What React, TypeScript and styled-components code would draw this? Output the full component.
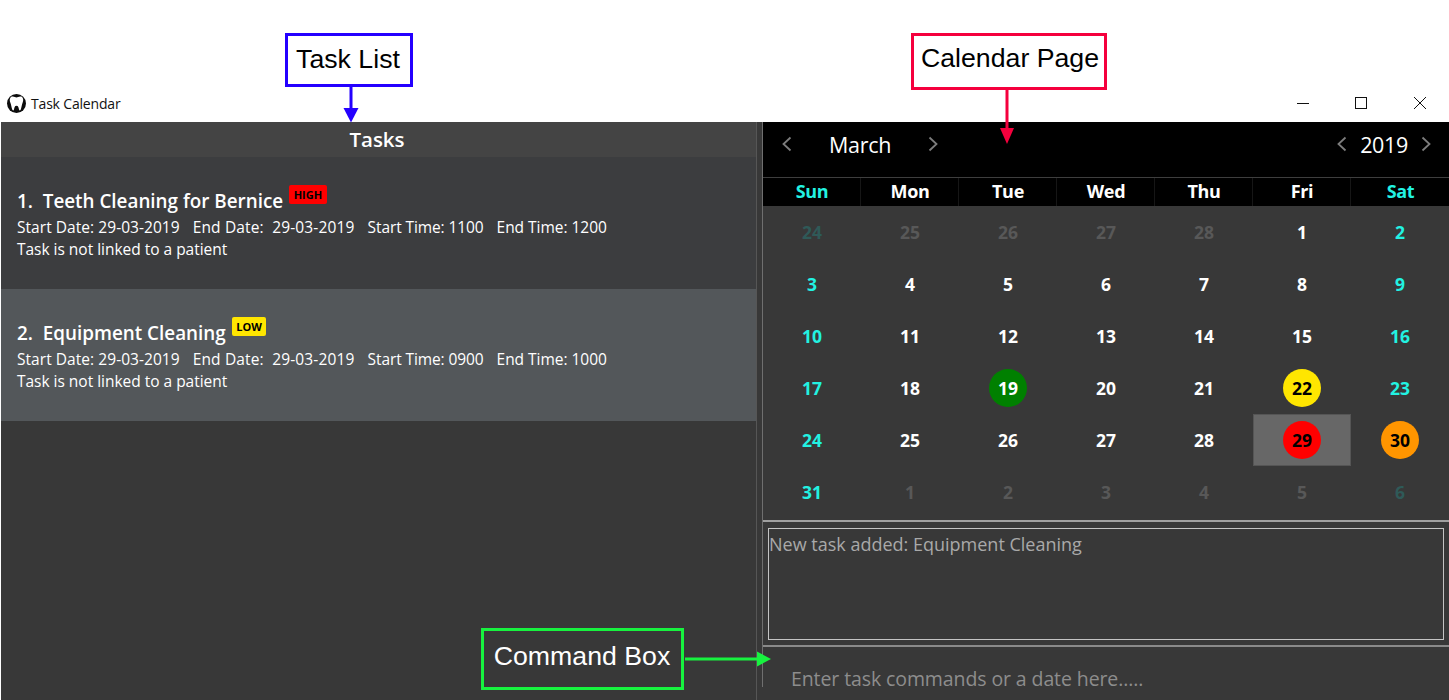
import React from 'react';
import styled, { createGlobalStyle } from 'styled-components';

const UI_FONT = '"Open Sans", "Noto Sans", sans-serif';

const GlobalStyle = createGlobalStyle`
  html, body {
    margin: 0;
    width: 1449px;
    height: 700px;
    overflow: hidden;
    background: #fff;
  }
  * { box-sizing: border-box; }
`;

type Level = 'high' | 'low';

interface Task {
  index: number;
  title: string;
  level: Level;
  start: string;
  end: string;
  selected?: boolean;
}

const TASKS: Task[] = [
  { index: 1, title: 'Teeth Cleaning for Bernice', level: 'high', start: '1100', end: '1200' },
  { index: 2, title: 'Equipment Cleaning', level: 'low', start: '0900', end: '1000', selected: true },
];

const WEEKDAYS = ['Sun', 'Mon', 'Tue', 'Wed', 'Thu', 'Fri', 'Sat'];

const BEFORE = [24, 25, 26, 27, 28];
const AFTER = [1, 2, 3, 4, 5, 6];
const MARKS: Record<number, string> = { 19: '#008000', 22: '#ffe600', 29: '#ff0000', 30: '#ff9500' };

function buildDays() {
  const days: { day: number; muted: boolean }[] = [];
  BEFORE.forEach((day) => days.push({ day, muted: true }));
  for (let day = 1; day <= 31; day++) days.push({ day, muted: false });
  AFTER.forEach((day) => days.push({ day, muted: true }));
  return days;
}

function Chevron({ left }: { left?: boolean }) {
  return (
    <ChevronSvg viewBox='0 0 10 16' $left={left}>
      <path d='M1.5 1.5 L8.5 8 L1.5 14.5' fill='none' stroke='#7d7d7d' strokeWidth='1.8' />
    </ChevronSvg>
  );
}

function ToothIcon() {
  return (
    <svg width='19' height='19' viewBox='0 0 19 19'>
      <circle cx='9.5' cy='9.5' r='9.5' fill='#0c0c0c' />
      <path
        d='M5 2.6 C7 2.2 8.3 3.4 9.5 3.4 C10.7 3.4 12 2.2 14 2.6 C16.5 3.2 16.6 6.6 15.6 8.8 C14.8 10.6 14.6 13.4 13.8 15.6 C13.4 16.7 12.3 16.6 12 15.5 C11.6 13.9 11.4 11.8 9.5 11.8 C7.6 11.8 7.4 13.9 7 15.5 C6.7 16.6 5.6 16.7 5.2 15.6 C4.4 13.4 4.2 10.6 3.4 8.8 C2.4 6.6 2.5 3.2 5 2.6 Z'
        fill='#fff'
      />
    </svg>
  );
}

function WindowControls() {
  return (
    <Controls>
      <svg width='12' height='12' viewBox='0 0 12 12'>
        <path d='M0 6.5 H12' stroke='#111' strokeWidth='1' />
      </svg>
      <svg width='12' height='12' viewBox='0 0 12 12'>
        <rect x='0.5' y='0.5' width='11' height='11' fill='none' stroke='#111' strokeWidth='1' />
      </svg>
      <svg width='14' height='14' viewBox='0 0 14 14'>
        <path d='M1 1 L13 13 M13 1 L1 13' stroke='#111' strokeWidth='1' />
      </svg>
    </Controls>
  );
}

function TaskCard({ task }: { task: Task }) {
  return (
    <Card $selected={task.selected}>
      <TitleRow>
        <TaskTitle>
          {task.index}.&nbsp; {task.title}
        </TaskTitle>
        <Badge $level={task.level}>{task.level.toUpperCase()}</Badge>
      </TitleRow>
      <DetailRow>
        <span>Start Date: 29-03-2019</span>
        <span>End Date:&nbsp; 29-03-2019</span>
        <span>Start Time: {task.start}</span>
        <span>End Time: {task.end}</span>
      </DetailRow>
      <DetailLine>Task is not linked to a patient</DetailLine>
    </Card>
  );
}

function Calendar() {
  return (
    <>
      <MonthBar>
        <MonthGroup>
          <Chevron left />
          <MonthName>March</MonthName>
          <Chevron />
        </MonthGroup>
        <MonthGroup>
          <Chevron left />
          <YearName>2019</YearName>
          <Chevron />
        </MonthGroup>
      </MonthBar>
      <WeekHeader>
        {WEEKDAYS.map((name, i) => (
          <WeekDay key={name} $weekend={i === 0 || i === 6}>
            {name}
          </WeekDay>
        ))}
      </WeekHeader>
      <DayGrid>
        {buildDays().map(({ day, muted }, i) => {
          const weekend = i % 7 === 0 || i % 7 === 6;
          const mark = muted ? undefined : MARKS[day];
          return (
            <DayCell key={i} $today={!muted && day === 29}>
              <DayNumber $weekend={weekend} $muted={muted} $mark={mark}>
                {day}
              </DayNumber>
            </DayCell>
          );
        })}
      </DayGrid>
    </>
  );
}

export default function App() {
  return (
    <Page>
      <GlobalStyle />
      <TaskListNote>Task List</TaskListNote>
      <TaskListArrow viewBox='0 0 16 37'>
        <path d='M8 0 V24' stroke='#2400ff' strokeWidth='3' />
        <path d='M0.5 22 H15.5 L8 36.5 Z' fill='#2400ff' />
      </TaskListArrow>
      <CalendarNote>Calendar Page</CalendarNote>
      <CalendarArrow viewBox='0 0 16 54'>
        <path d='M8 0 V40' stroke='#f5003d' strokeWidth='3' />
        <path d='M1 38 H15 L8 54 Z' fill='#f5003d' />
      </CalendarArrow>
      <CommandNote>Command Box</CommandNote>
      <CommandArrow viewBox='0 0 86 16'>
        <path d='M0 8 H74' stroke='#17f23f' strokeWidth='3' />
        <path d='M72 0.5 L86 8 L72 15.5 Z' fill='#17f23f' />
      </CommandArrow>

      <TitleBar>
        <ToothIcon />
        <AppName>Task Calendar</AppName>
        <WindowControls />
      </TitleBar>

      <Body>
        <LeftPane>
          <PaneHeader>Tasks</PaneHeader>
          {TASKS.map((task) => (
            <TaskCard key={task.index} task={task} />
          ))}
        </LeftPane>
        <Splitter />
        <RightPane>
          <Calendar />
          <ResultArea>
            <ResultBox>New task added: Equipment Cleaning</ResultBox>
          </ResultArea>
          <CommandArea>Enter task commands or a date here.....</CommandArea>
        </RightPane>
      </Body>
    </Page>
  );
}

const Page = styled.div`
  position: relative;
  width: 1449px;
  height: 700px;
  padding-top: 92px;
  display: flex;
  flex-direction: column;
  font-family: ${UI_FONT};
`;

const Note = styled.div`
  position: absolute;
  display: flex;
  align-items: center;
  justify-content: center;
  background: #fff;
  color: #000;
  font-family: 'Liberation Sans', Arial, sans-serif;
  font-size: 26.7px;
  white-space: nowrap;
  border: 3px solid;
  z-index: 2;
`;

const TaskListNote = styled(Note)`
  left: 285px;
  top: 33px;
  width: 128px;
  height: 54px;
  padding: 0 2px 2px 0;
  border-color: #2400ff;
`;

const CalendarNote = styled(Note)`
  left: 911px;
  top: 33px;
  width: 196px;
  height: 57px;
  padding: 0 0 6px 2px;
  border-color: #f5003d;
`;

const CommandNote = styled(Note)`
  left: 481px;
  top: 628px;
  width: 203px;
  height: 62px;
  padding: 0 1px 6px 0;
  border-color: #17f23f;
  background: #383838;
  color: #fff;
`;

const Arrow = styled.svg`
  position: absolute;
  z-index: 2;
`;

const TaskListArrow = styled(Arrow)`
  left: 343px;
  top: 86px;
  width: 16px;
  height: 37px;
`;

const CalendarArrow = styled(Arrow)`
  left: 999px;
  top: 90px;
  width: 16px;
  height: 54px;
`;

const CommandArrow = styled(Arrow)`
  left: 685px;
  top: 651px;
  width: 86px;
  height: 16px;
`;

const TitleBar = styled.div`
  height: 30px;
  flex: none;
  display: flex;
  align-items: center;
  padding: 0 0 8px 7px;
  background: #fff;
`;

const AppName = styled.span`
  margin-left: 5px;
  font-size: 14px;
  letter-spacing: -0.18px;
  color: #111;
`;

const Controls = styled.div`
  margin-left: auto;
  width: 152px;
  padding-right: 22px;
  display: flex;
  align-items: center;
  justify-content: space-between;
`;

const Body = styled.div`
  flex: 1;
  min-height: 0;
  display: flex;
  align-items: flex-start;
  margin-left: 1px;
  background: #383838;
`;

const LeftPane = styled.div`
  width: 755px;
  flex: none;
  display: flex;
  flex-direction: column;
`;

const PaneHeader = styled.div`
  height: 35px;
  flex: none;
  padding-right: 3px;
  background: #444444;
  color: #fff;
  font-size: 20.5px;
  font-weight: 600;
  line-height: 35px;
  text-align: center;
`;

const Card = styled.div<{ $selected?: boolean }>`
  height: 132px;
  flex: none;
  padding: 28px 0 0 16px;
  background: ${(p) => (p.$selected ? '#53575a' : '#3c3d3f')};
  color: #fff;
`;

const TitleRow = styled.div`
  display: flex;
  align-items: flex-start;
  height: 31px;
`;

const TaskTitle = styled.span`
  font-size: 18.85px;
  font-weight: 600;
  line-height: 33px;
  white-space: pre;
`;

const Badge = styled.span<{ $level: Level }>`
  height: 19px;
  margin-left: 6px;
  padding: 0 4.5px;
  border-radius: 2px;
  font-size: 11px;
  font-weight: 700;
  line-height: 20px;
  color: #000;
  background: ${(p) => (p.$level === 'high' ? '#ff0000' : '#ffe600')};
`;

const DetailRow = styled.div`
  display: flex;
  gap: 13px;
  font-size: 15.5px;
  line-height: 22px;
  height: 22px;
  letter-spacing: 0.05px;
  white-space: nowrap;
  span:nth-child(2) {
    letter-spacing: 0.15px;
  }
  span:nth-child(3) {
    letter-spacing: -0.1px;
  }
  span:nth-child(4) {
    letter-spacing: -0.03px;
  }
`;

const DetailLine = styled.div`
  font-size: 15.5px;
  line-height: 22px;
  letter-spacing: -0.02px;
`;

const Splitter = styled.div`
  width: 6px;
  height: 100%;
  flex: none;
  margin: 0;
  background: #383838;
  border-left: 1px solid #565656;
`;

const RightPane = styled.div`
  flex: 1;
  min-width: 0;
  height: 565px;
  display: flex;
  flex-direction: column;
  border-left: 1px solid #6f6f6f;
`;

const MonthBar = styled.div`
  height: 55px;
  flex: none;
  display: flex;
  align-items: flex-start;
  justify-content: space-between;
  padding: 8px 18px 0 19px;
  background: #000;
  color: #fff;
`;

const MonthGroup = styled.div`
  display: flex;
  align-items: center;
  height: 28px;
`;

const ChevronSvg = styled.svg<{ $left?: boolean }>`
  width: 10px;
  height: 16px;
  transform: ${(p) => (p.$left ? 'scaleX(-1)' : 'none')};
`;

const MonthName = styled.span`
  width: 136px;
  text-align: center;
  font-size: 21.5px;
  letter-spacing: -0.3px;
`;

const YearName = styled.span`
  width: 74px;
  text-align: center;
  font-size: 21.5px;
  letter-spacing: -0.4px;
`;

const WeekHeader = styled.div`
  height: 29px;
  flex: none;
  display: grid;
  grid-template-columns: repeat(7, 1fr);
  background: #000;
  border-top: 1px solid #3e3e3e;
`;

const WeekDay = styled.div<{ $weekend?: boolean }>`
  display: flex;
  align-items: center;
  justify-content: center;
  padding: 0 0 2px 1px;
  font-size: 18px;
  font-weight: 700;
  letter-spacing: -0.3px;
  color: ${(p) => (p.$weekend ? '#22f2e2' : '#fff')};
  border-right: 1px solid #161616;
  &:last-child {
    border-right: none;
  }
`;

const DayGrid = styled.div`
  height: 314px;
  flex: none;
  display: grid;
  grid-template-columns: repeat(7, 1fr);
  grid-template-rows: repeat(6, 52px);
`;

const DayCell = styled.div<{ $today?: boolean }>`
  display: flex;
  align-items: center;
  justify-content: center;
  background: ${(p) => (p.$today ? '#676767' : 'transparent')};
  box-shadow: ${(p) => (p.$today ? 'inset 0 0 0 1px #555' : 'none')};
`;

const DayNumber = styled.span<{ $weekend: boolean; $muted: boolean; $mark?: string }>`
  width: 38px;
  height: 38px;
  display: flex;
  align-items: center;
  justify-content: center;
  border-radius: 50%;
  font-size: 17.5px;
  font-weight: 700;
  background: ${(p) => p.$mark ?? 'transparent'};
  color: ${(p) => {
    if (p.$mark) return p.$mark === '#008000' ? '#fff' : '#000';
    if (p.$muted) return p.$weekend ? '#2f5a58' : '#585858';
    return p.$weekend ? '#22f2e2' : '#fff';
  }};
`;

const ResultArea = styled.div`
  height: 127px;
  flex: none;
  padding: 6px 5px 5px 5px;
  border-top: 2px solid #a0a0a0;
  border-bottom: 2px solid #8a8a8a;
`;

const ResultBox = styled.div`
  height: 100%;
  padding: 3px 0 0 0;
  border: 1px solid #c4c4c4;
  color: #a9a9a9;
  font-size: 18px;
  line-height: 25px;
`;

const CommandArea = styled.div`
  height: 40px;
  flex: none;
  padding: 19px 0 0 28px;
  color: #8d8d8d;
  font-size: 19.5px;
  line-height: 26px;
  letter-spacing: -0.1px;
  white-space: nowrap;
`;
